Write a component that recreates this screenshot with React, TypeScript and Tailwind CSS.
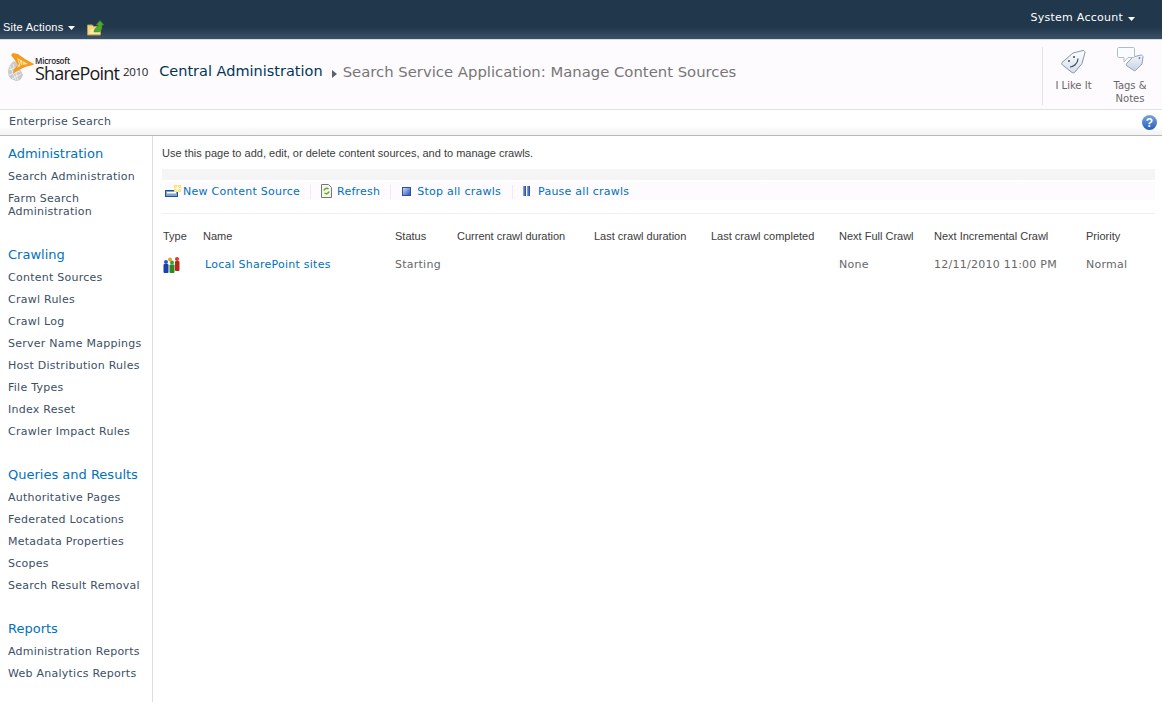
const verdana = "font-['DejaVu_Sans',Verdana,sans-serif]";

const NAV = [
  {
    title: "Administration",
    items: ["Search Administration", "Farm Search Administration"],
  },
  {
    title: "Crawling",
    items: [
      "Content Sources",
      "Crawl Rules",
      "Crawl Log",
      "Server Name Mappings",
      "Host Distribution Rules",
      "File Types",
      "Index Reset",
      "Crawler Impact Rules",
    ],
  },
  {
    title: "Queries and Results",
    items: [
      "Authoritative Pages",
      "Federated Locations",
      "Metadata Properties",
      "Scopes",
      "Search Result Removal",
    ],
  },
  {
    title: "Reports",
    items: ["Administration Reports", "Web Analytics Reports"],
  },
];

const COLUMNS = "grid grid-cols-[40px_192px_62px_137px_117px_128px_95px_152px_1fr]";

const HEADERS = [
  "Type",
  "Name",
  "Status",
  "Current crawl duration",
  "Last crawl duration",
  "Last crawl completed",
  "Next Full Crawl",
  "Next Incremental Crawl",
  "Priority",
];

const Caret = () => (
  <svg width="7" height="4" viewBox="0 0 7 4" className="ml-[5px] inline-block align-middle">
    <path d="M0 0h7L3.500 4z" fill="#ffffff" />
  </svg>
);

const FolderUp = () => (
  <svg width="17" height="16" viewBox="0 0 17 16">
    <path d="M0.500 5h5l1 1.500h7v8.500h-13z" fill="#f3d680" stroke="#b59a50" />
    <path d="M2 14l2-5h10l-2 5z" fill="#fbe9a8" />
    <path d="M7 12c0-3 2-5 4-5V5h-2l4-4.500L17 5h-2v3c0 2-2 4-4 4z" fill="#4fa72f" stroke="#2f7f1e" strokeWidth="0.500" />
  </svg>
);

const SpLogo = () => (
  <svg width="26" height="30" viewBox="0 0 26 30">
    {/* grey globe */}
    <path d="M6 9c-3 2-6 6-6 11 0 3 1 5 3 7l5 2c2 0 4-1 5-2l2-4-3-6-3-6z" fill="#c9cacc" />
    <path d="M1 18l9-3M1 23l11-4M4 27l9-5M5 12l5 16M2 14l6 14" stroke="#f4f4f4" strokeWidth="0.800" fill="none" />
    {/* orange swoosh */}
    <path d="M5 1l5 1 7 5 9 5-1 1-8 2-8 4-4 3 1-5 4-4-4-6-3-4z" fill="#f59a1b" />
    <path d="M9 6l6 3 5 3-6 1-5 3 2-4z" fill="#fde39b" />
    <path d="M11 8l2 6M15 9l-1 5" stroke="#f59a1b" strokeWidth="0.800" />
  </svg>
);

const LikeTag = () => (
  <svg width="25" height="24" viewBox="0 0 25 24">
    <defs>
      <linearGradient id="likeFill" x1="0" y1="0" x2="0" y2="1">
        <stop offset="0" stopColor="#ffffff" />
        <stop offset="1" stopColor="#d5deea" />
      </linearGradient>
    </defs>
    <path d="M1 12.500L12 3l10-2.500c1 0 2 1 2 2l-3 11-7 8.500c-1 1-2 1-3 .5L1.500 15c-1-1-1-2-.5-2.500z" fill="url(#likeFill)" stroke="#7f96b3" />
    <circle cx="8" cy="11" r="1" fill="#3f4e60" />
    <circle cx="13" cy="7" r="1" fill="#3f4e60" />
    <path d="M9 17c3 0 8-3 8-8.500" stroke="#3f4e60" strokeWidth="1.200" fill="none" />
  </svg>
);

const TagsNotes = () => (
  <svg width="27" height="25" viewBox="0 0 27 25">
    <defs>
      <linearGradient id="tagFill" x1="0" y1="0" x2="0" y2="1">
        <stop offset="0" stopColor="#f3f6fa" />
        <stop offset="1" stopColor="#c6d2e1" />
      </linearGradient>
    </defs>
    <path d="M16 10l8-2c1 0 2 1 2 2l-1 7-6 6c-1 1-2 1-3 0l-6-4c-1-1-1-2 0-3z" fill="url(#tagFill)" stroke="#8ea3bd" />
    <circle cx="22.500" cy="11" r="1" fill="#6f8199" />
    <path d="M2 .5h14c1 0 1.500 .5 1.500 1.500v7c0 1-.5 1.500-1.500 1.500h-5l-4 4.500v-4.500H2C1 10.500 .5 10 .5 9V2C.5 1 1 .5 2 .5z" fill="#fbfcfd" stroke="#b0bccb" />
  </svg>
);

const NewSourceIcon = () => (
  <svg width="16" height="14" viewBox="0 0 16 14">
    <rect x="0.500" y="5.500" width="12" height="6" fill="#7fa3d6" stroke="#27508f" />
    <rect x="2" y="7" width="9" height="1.500" fill="#ffffff" />
    <rect x="9" y="0" width="7" height="7" fill="#f7e26b" />
    <path d="M12.500 0v7M9 3.500h7M10 1l5 5M15 1l-5 5" stroke="#ffffff" strokeWidth="0.700" />
  </svg>
);

const RefreshIcon = () => (
  <svg width="11" height="14" viewBox="0 0 11 14" className="mb-[3px]">
    <path d="M0.500 0.500h7l3 3v10h-10z" fill="#f5f5ef" stroke="#77786f" />
    <path d="M3 6.500a2.800 2.800 0 0 1 4.500-1.500M8 7.500a2.800 2.800 0 0 1-4.500 1.500" stroke="#6da52a" strokeWidth="1.500" fill="none" />
  </svg>
);

const StopIcon = () => (
  <span className="mb-[2px] block h-[9px] w-[9px] border border-[#2e4e9e] bg-gradient-to-br from-[#c8d8f4] to-[#2c55b8]" />
);

const PauseIcon = () => (
  <span className="mb-[3px] flex gap-[1px]">
    <span className="block h-[10px] w-[3px] bg-gradient-to-r from-[#8fb0ea] to-[#1b3f9e]" />
    <span className="block h-[10px] w-[3px] bg-gradient-to-r from-[#8fb0ea] to-[#1b3f9e]" />
  </span>
);

const PeopleIcon = () => (
  <svg width="17" height="16" viewBox="0 0 17 16">
    <circle cx="7" cy="2.500" r="2" fill="#f0a020" />
    <circle cx="14" cy="2" r="2" fill="#d83a28" />
    <rect x="12" y="4" width="4.500" height="10" rx="1" fill="#b82818" />
    <circle cx="3" cy="5" r="2" fill="#2a55c8" />
    <rect x="0.500" y="7" width="5" height="9" rx="1" fill="#1c3fae" />
    <circle cx="9" cy="5.500" r="2" fill="#3f9c2b" />
    <rect x="6.500" y="7.500" width="5" height="8.500" rx="1" fill="#2f8a22" />
  </svg>
);

const Sep = ({ className }: { className: string }) => <span className={`h-[14px] w-px bg-[#f0e9f2] ${className}`} />;

const App = () => {
  return (
    <div className={`flex h-[702px] w-[1162px] flex-col overflow-hidden bg-white text-[11px] tracking-[0.25px] ${verdana}`}>
      {/* Top bar */}
      <div className="flex h-[39px] shrink-0 bg-gradient-to-b from-[#21374c] from-70% to-[#3b5167] text-white">
        <div className="mt-[20px] flex h-[15px] items-center pl-[3px] font-['Liberation_Sans',sans-serif] text-[11px]">
          Site Actions
          <Caret />
          <span className="ml-[12px] mt-[1px]">
            <FolderUp />
          </span>
        </div>
        <div className="ml-auto mt-[10px] flex h-[15px] translate-y-[1px] items-center pr-[27px]">
          System Account
          <Caret />
        </div>
      </div>

      {/* Title row */}
      <div className="flex h-[71px] shrink-0 border-y border-y-[#e0e0e0] border-t-[#d6dde3] bg-[#fefbff]">
        <div className="ml-[8px] mt-[12px] flex h-[30px] items-start tracking-normal">
          <SpLogo />
          <div className="ml-[1px] flex flex-col pt-[5px] font-['Open_Sans',sans-serif] text-[#1a1a1a]">
            <span className="h-[7px] text-[8px] font-semibold leading-[7px] tracking-[-0.2px]">Microsoft</span>
            <div className="flex h-[18px] items-end leading-[18px]">
              <span className="text-[18px] tracking-[-0.8px]">SharePoint</span>
              <span className="mb-[1px] ml-[4px] text-[11.500px] tracking-[-0.3px]">2010</span>
            </div>
          </div>
        </div>
        <div className="ml-[11px] mt-[22px] flex h-[20px] items-center tracking-normal">
          <span className="text-[14.500px] text-[#003759]">Central Administration</span>
          <svg width="5" height="8" viewBox="0 0 5 8" className="ml-[9px] mr-[6px] mt-[3px]">
            <path d="M0 0l5 4-5 4z" fill="#58626c" />
          </svg>
          <span className="text-[14.840px] text-[#767676]">Search Service Application: Manage Content Sources</span>
        </div>
        <div className="ml-auto mt-[7px] flex h-[58px] w-[120px] border-l border-[#e3e3e3] text-[10px] leading-[13px] tracking-normal text-[#676767]">
          <div className="flex w-[61px] flex-col items-center pt-[3px]">
            <LikeTag />
            <span className="mt-[5px]">I Like It</span>
          </div>
          <div className="flex w-[52px] flex-col items-center">
            <TagsNotes />
            <span className="mt-[7px] text-center">Tags &amp; Notes</span>
          </div>
        </div>
      </div>

      {/* Breadcrumb row */}
      <div className="flex h-[26px] shrink-0 items-center justify-between border-b border-[#b8b8b8] bg-gradient-to-b from-white from-60% to-[#f3f3f3] pl-[9px] pr-[5px] text-[#3b4f65]">
        <span>Enterprise Search</span>
        <span className="flex h-[15px] w-[15px] items-center justify-center rounded-full bg-gradient-to-b from-[#7aa4e0] to-[#2a5cb8] font-['Liberation_Sans',sans-serif] text-[12px] font-bold text-white">
          ?
        </span>
      </div>

      <div className="flex min-h-0 flex-1">
        {/* Quick launch */}
        <nav className="w-[153px] border-r border-[#dbddde] pl-[8px] pt-[9px] text-[#3b4f65]">
          {NAV.map((group) => (
            <div key={group.title} className="mb-[24px]">
              <div className="flex h-[17px] items-center text-[13px] tracking-normal text-[#0072bc]">{group.title}</div>
              <ul className="mt-[3px]">
                {group.items.map((item) => (
                  <li key={item} className="py-[4.500px] pr-[8px] leading-[13px]">
                    {item}
                  </li>
                ))}
              </ul>
            </div>
          ))}
        </nav>

        {/* Main */}
        <main className="flex-1 pl-[9px] pr-[7px] pt-[10px] text-[#676767]">
          <p className="font-['Liberation_Sans',sans-serif] text-[11px] leading-[15px] tracking-normal text-[#3b3b3b]">
            Use this page to add, edit, or delete content sources, and to manage crawls.
          </p>
          <div className="mt-[8px] h-[45px] border-b border-[#f0f0f0] bg-gradient-to-b from-[#f5f5f5] from-25% to-white to-25%">
            <div className="pl-[3px] pt-[13px] text-[#0072bc]">
              <div className="flex h-[18px] w-full items-center bg-[#fefbff] pt-[2px]">
                <NewSourceIcon />
                <span className="ml-[2px]">New Content Source</span>
                <Sep className="ml-[10px] mr-[10px]" />
                <RefreshIcon />
                <span className="ml-[5px]">Refresh</span>
                <Sep className="ml-[10px] mr-[11px]" />
                <StopIcon />
                <span className="ml-[6px]">Stop all crawls</span>
                <Sep className="ml-[11px] mr-[10px]" />
                <PauseIcon />
                <span className="ml-[8px]">Pause all crawls</span>
              </div>
            </div>
          </div>

          <div className={`${COLUMNS} mt-[14px] h-[15px] items-center pl-[1px] font-['Liberation_Sans',sans-serif] text-[11px] tracking-normal text-[#3b3b3b]`}>
            {HEADERS.map((header) => (
              <span key={header}>{header}</span>
            ))}
          </div>
          <div className={`${COLUMNS} mt-[14px] h-[16px] items-center pl-[1px]`}>
            <PeopleIcon />
            <span className="pl-[2px] text-[#0072bc]">Local SharePoint sites</span>
            <span>Starting</span>
            <span />
            <span />
            <span />
            <span>None</span>
            <span>12/11/2010 11:00 PM</span>
            <span>Normal</span>
          </div>
        </main>
      </div>
    </div>
  );
};

export default App;
